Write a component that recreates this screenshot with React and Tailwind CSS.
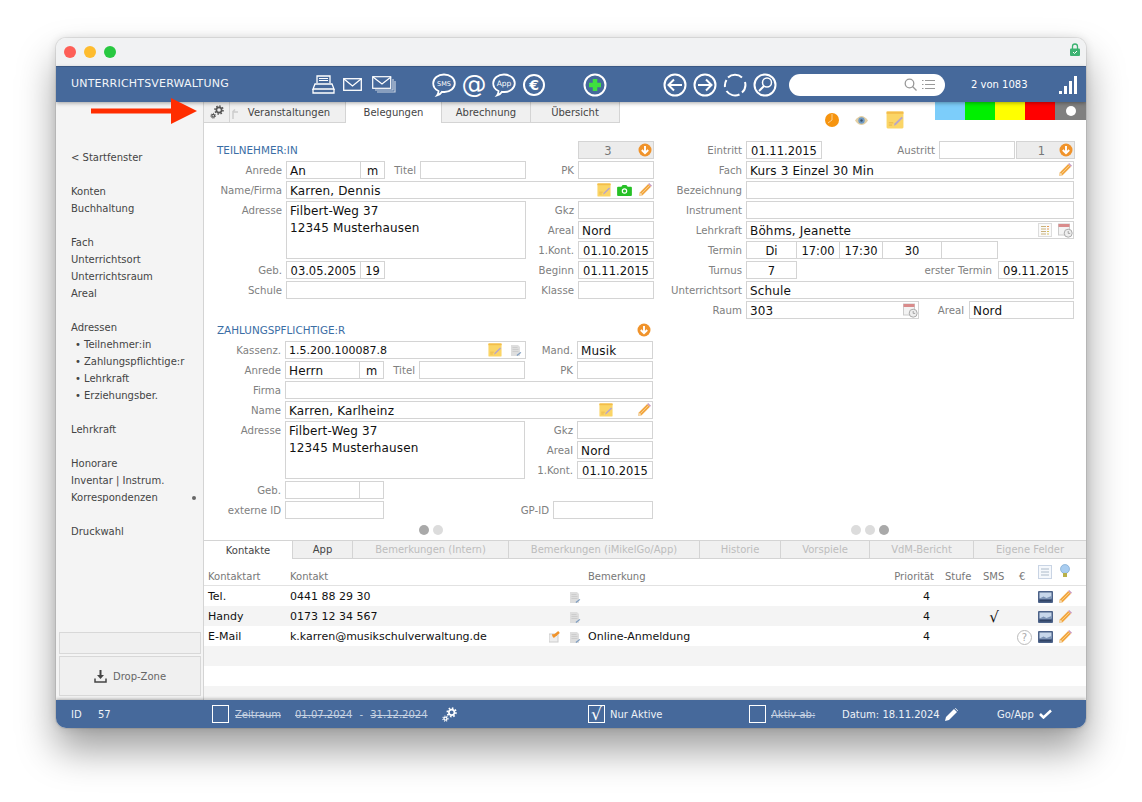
import React from "react";

const Gear = ({ c = "#555", s = 14 }) => (
  <svg width={s} height={s} viewBox="0 0 14 14" fill="none" stroke={c}>
    <circle cx="9" cy="5" r="2.6" strokeWidth="1.6" />
    <circle cx="9" cy="5" r="4" strokeWidth="1.6" strokeDasharray="1.5 1.6" />
    <circle cx="3.2" cy="10.8" r="1.4" strokeWidth="1.2" />
    <circle cx="3.2" cy="10.8" r="2.4" strokeWidth="1" strokeDasharray="1 1" />
  </svg>
);
const Pencil = () => (
  <svg width="14" height="14" viewBox="0 0 14 14">
    <path d="M1 13l.8-3.6L10.2 1l2.8 2.8L4.6 12.2z" fill="#f2a640" />
    <path d="M1 13l.8-3.6 2.8 2.8z" fill="#f3dcb8" />
    <path d="M3.2 10.8l8.4-8.4" stroke="#f9cf8a" strokeWidth="1" />
    <path d="M10.2 1l1-1 2.8 2.8-1 1z" fill="#c99ac4" />
  </svg>
);
const Note = ({ s = 14 }) => (
  <svg width={s} height={s} viewBox="0 0 16 16">
    <rect x=".5" y=".5" width="15" height="15" rx="1" fill="#fbd566" />
    <rect x=".5" y=".5" width="15" height="2" fill="#f3bd4b" />
    <path d="M2.500 10.500h4M2.500 12.500h3" stroke="#e3ac3f" strokeWidth=".7" />
    <path d="M7 13l.6-1.800L13.800 5l1.200 1.200L8.800 12.400z" fill="#b8a6c8" />
  </svg>
);
const Camera = () => (
  <svg width="15" height="12" viewBox="0 0 16 13">
    <path d="M1 3h3.500L6 1h4l1.500 2H15a1 1 0 011 1v8a1 1 0 01-1 1H1a1 1 0 01-1-1V4a1 1 0 011-1z" fill="#26c026" />
    <circle cx="8" cy="7.600" r="3" fill="#fff" />
    <circle cx="8" cy="7.600" r="1.700" fill="#26c026" />
  </svg>
);
const Doc = () => (
  <svg width="11" height="13" viewBox="0 0 11 13">
    <path d="M0 1h7l2 2v9H0z" fill="#dedede" />
    <path d="M1.500 3.500h5M1.500 5.500h6M1.500 7.500h6" stroke="#c6c6c6" strokeWidth=".7" />
    <path d="M5.500 11l4-3 .8.700L6.300 12z" fill="#7d9cc0" />
  </svg>
);
const CalClock = () => (
  <svg width="15" height="15" viewBox="0 0 15 15">
    <rect x=".5" y="1" width="11" height="11" fill="#f3f3f3" stroke="#ccc" />
    <rect x=".5" y="1" width="11" height="3" fill="#d98b8b" />
    <circle cx="10.200" cy="10.200" r="4" fill="#eee" stroke="#aaa" />
    <path d="M10.200 8v2.400h2" stroke="#888" fill="none" strokeWidth=".7" />
  </svg>
);
const ListColor = () => (
  <svg width="14" height="14" viewBox="0 0 14 14">
    <rect x=".5" y=".5" width="13" height="13" fill="#fafafa" stroke="#ddd" />
    <path d="M3 3.500h5M3 6h5M3 8.500h5M3 11h5" stroke="#c9b27c" />
    <path d="M9 3.500h2M9 6h2" stroke="#e79a55" />
    <path d="M9 8.500h2M9 11h2" stroke="#d9c25c" />
  </svg>
);
const OrangeDown = () => (
  <svg width="14" height="14" viewBox="0 0 14 14">
    <circle cx="7" cy="7" r="6.500" fill="#f0932b" />
    <path d="M7 3v7M3.800 7L7 10.200 10.200 7" stroke="#fff" strokeWidth="1.900" fill="none" />
  </svg>
);
const Picture = () => (
  <svg width="15" height="12" viewBox="0 0 15 12">
    <rect x="0" y="0" width="15" height="12" rx="1" fill="#4c6288" />
    <rect x="1.500" y="1.500" width="12" height="6" fill="#c7d7ea" />
    <path d="M1.500 7.500l4-2 3 1.500 5-2v2.500z" fill="#7b93b6" />
    <rect x="1.500" y="9" width="12" height="1.500" fill="#2f4264" />
  </svg>
);
const Bubble = ({ label, size }) => (
  <svg width="24" height="24" viewBox="0 0 24 24" fill="none">
    <path d="M12 1.500c6 0 10.800 3.800 10.800 8.800S18 19 12.500 19c-1 0-1.800 0-2.500-.2-1 1.700-3 3.200-5 3.700 1-1.200 1.500-2.800 1.500-4.500C3 16.500 1.200 13.500 1.200 10.300 1.200 5.300 6 1.500 12 1.500z" stroke="#fff" strokeWidth="1.800" />
    <text x="12" y="13" textAnchor="middle" fontSize={size} fill="#fff" fontFamily="DejaVu Sans">{label}</text>
  </svg>
);
const CircleWrap = ({ children }) => (
  <svg width="24" height="24" viewBox="0 0 24 24" fill="none" stroke="#fff" strokeWidth="2">
    {children}
  </svg>
);

const Label = ({ w, children, className = "" }) => (
  <div style={{ width: w }} className={`shrink-0 pt-[3px] text-right text-[10.200px] leading-[14px] text-[#808080] whitespace-nowrap ${className}`}>
    {children}
  </div>
);
const Box = ({ w, children, center, className = "", h = 18, gray }) => (
  <div
    style={{ width: w, height: h }}
    className={`box-border flex shrink-0 overflow-hidden border border-[#d4d4d4] leading-[18px] text-[#111] whitespace-pre ${center ? "justify-center text-[11.5px]" : "pl-[3px] text-[12px] tracking-[0.15px]"} ${gray ? "bg-[#ececec]" : "bg-white"} ${className}`}
  >
    {children}
  </div>
);
const Addr = () => (
  <div className="w-[240px] shrink-0">
    <div className="mb-[2px] box-border h-[58px] border border-[#d4d4d4] pl-[3px] pt-[1px] text-[12px] leading-[16.500px] tracking-[0.15px] text-[#111]">
      <div>Filbert-Weg 37</div>
      <div>12345 Musterhausen</div>
    </div>
  </div>
);
const Row = ({ children, className = "" }) => <div className={`mb-[2px] flex h-[18px] ${className}`}>{children}</div>;
const Gap = () => <div className="w-[4px] shrink-0" />;
const RL = ({ l, children, w = 76 }) => (
  <Row className="justify-end">
    <Label w={48}>{l}</Label>
    <Gap />
    <Box w={w} center={/\d\d\./.test(children || "")}>{children}</Box>
  </Row>
);
const Icons = ({ children, className = "" }) => (
  <div className={`ml-auto flex h-full items-center ${className}`}>{children}</div>
);

const Block1 = () => (
  <div className="w-[450px]">
    <Row className="items-center justify-between">
      <div className="pl-[13px] pt-[2px] text-[10.400px] text-[#3b6ea5]">TEILNEHMER:IN</div>
      <Box w={76} gray center className="relative pr-[16px] !text-[#777]">3<span className="absolute right-[1px] top-[1px]"><OrangeDown /></span></Box>
    </Row>
    <Row>
      <Label w={78}>Anrede</Label><Gap /><Box w={75}>An</Box><Box w={25} center className="-ml-px">m</Box>
      <Label w={31}>Titel</Label><Gap /><Box w={106} />
      <Label w={48}>PK</Label><Gap /><Box w={76} />
    </Row>
    <Row>
      <Label w={78}>Name/Firma</Label><Gap />
      <Box w={368}>Karren, Dennis
        <Icons className="gap-[6px] pr-[1px]"><Note /><Camera /><Pencil /></Icons>
      </Box>
    </Row>
    <div className="flex">
      <Label w={78}>Adresse</Label><Gap />
      <Addr />
      <div className="flex-1">
        <RL l="Gkz" />
        <RL l="Areal">Nord</RL>
        <RL l="1.Kont.">01.10.2015</RL>
      </div>
    </div>
    <Row>
      <Label w={78}>Geb.</Label><Gap /><Box w={75} center>03.05.2005</Box><Box w={25} center className="-ml-px">19</Box>
      <Label w={189}>Beginn</Label><Gap /><Box w={76} center>01.11.2015</Box>
    </Row>
    <Row>
      <Label w={78}>Schule</Label><Gap /><Box w={240} />
      <Label w={48}>Klasse</Label><Gap /><Box w={76} />
    </Row>
  </div>
);

const Block2 = () => (
  <div className="mt-[20px] w-[449px]">
    <Row className="items-center justify-between">
      <div className="pl-[13px] pt-[2px] text-[10.400px] text-[#3b6ea5]">ZAHLUNGSPFLICHTIGE:R</div>
      <span className="pr-[2px]"><OrangeDown /></span>
    </Row>
    <Row>
      <Label w={77}>Kassenz.</Label><Gap />
      <Box w={241}><span className="text-[11px] tracking-normal">1.5.200.100087.8</span>
        <Icons className="gap-[9px] pr-[3px]"><Note /><Doc /></Icons>
      </Box>
      <Label w={47}>Mand.</Label><Gap /><Box w={76}>Musik</Box>
    </Row>
    <Row>
      <Label w={77}>Anrede</Label><Gap /><Box w={75}>Herrn</Box><Box w={25} center className="-ml-px">m</Box>
      <Label w={31}>Titel</Label><Gap /><Box w={106} />
      <Label w={48}>PK</Label><Gap /><Box w={76} />
    </Row>
    <Row>
      <Label w={77}>Firma</Label><Gap /><Box w={368} />
    </Row>
    <Row>
      <Label w={77}>Name</Label><Gap />
      <Box w={368}>Karren, Karlheinz
        <Icons className="gap-[24px] pr-[1px]"><Note /><Pencil /></Icons>
      </Box>
    </Row>
    <div className="flex">
      <Label w={77}>Adresse</Label><Gap />
      <Addr />
      <div className="flex-1">
        <RL l="Gkz" />
        <RL l="Areal">Nord</RL>
        <RL l="1.Kont.">01.10.2015</RL>
      </div>
    </div>
    <Row>
      <Label w={77}>Geb.</Label><Gap /><Box w={75} /><Box w={25} className="-ml-px" />
    </Row>
    <Row>
      <Label w={77}>externe ID</Label><Gap /><Box w={99} />
      <Label w={165}>GP-ID</Label><Gap /><Box w={100} />
    </Row>
  </div>
);

const Dots = ({ n, active, className = "" }) => (
  <div className={`flex h-[10px] justify-center gap-[4px] ${className}`}>
    {Array.from({ length: n }).map((_, i) => (
      <div key={i} className={`h-[10px] w-[10px] rounded-full ${i === active ? "bg-[#a9a9a9]" : "bg-[#dcdcdc]"}`} />
    ))}
  </div>
);

const RightBlock = () => (
  <div className="ml-[10px] flex w-[410px] flex-col">
    <Row>
      <Label w={78}>Eintritt</Label><Gap /><Box w={76} center>01.11.2015</Box>
      <Label w={113}>Austritt</Label><Gap /><Box w={76} />
      <Box w={59} gray center className="relative ml-[1px] pr-[8px] !text-[#777]">1<span className="absolute right-[1px] top-[1px]"><OrangeDown /></span></Box>
    </Row>
    <Row>
      <Label w={78}>Fach</Label><Gap /><Box w={328}>Kurs 3 Einzel 30 Min<Icons className="pr-[1px]"><Pencil /></Icons></Box>
    </Row>
    <Row><Label w={78}>Bezeichnung</Label><Gap /><Box w={328} /></Row>
    <Row><Label w={78}>Instrument</Label><Gap /><Box w={328} /></Row>
    <Row>
      <Label w={78}>Lehrkraft</Label><Gap />
      <Box w={328}>Böhms, Jeanette<Icons className="gap-[6px]"><ListColor /><CalClock /></Icons></Box>
    </Row>
    <Row>
      <Label w={78}>Termin</Label><Gap />
      <Box w={51} center>Di</Box>
      <Box w={44} center className="-ml-px">17:00</Box>
      <Box w={44} center className="-ml-px">17:30</Box>
      <Box w={60} center className="-ml-px">30</Box>
      <Box w={57} className="-ml-px" />
    </Row>
    <Row>
      <Label w={78}>Turnus</Label><Gap /><Box w={51} center>7</Box>
      <Label w={195}>erster Termin</Label><div className="w-[6px] shrink-0" /><Box w={76} center>09.11.2015</Box>
    </Row>
    <Row><Label w={78}>Unterrichtsort</Label><Gap /><Box w={328}>Schule</Box></Row>
    <Row>
      <Label w={78}>Raum</Label><Gap /><Box w={173}>303<Icons><CalClock /></Icons></Box>
      <Label w={45}>Areal</Label><div className="w-[5px] shrink-0" /><Box w={105}>Nord</Box>
    </Row>
    <Dots n={3} active={2} className="ml-[2px] mt-auto" />
  </div>
);

const Tab = ({ w, active, dim, children, last }) => (
  <div
    style={{ width: w }}
    className={`box-border flex h-full shrink-0 items-center justify-center text-[10px] ${last ? "" : "border-r"} border-[#d4d4d4] ${active ? "bg-white" : "border-b bg-[#f0f0f0]"} ${dim ? "text-[#bdbdbd]" : "text-[#444]"}`}
  >
    {children}
  </div>
);

const cols = { a: "w-[86px] pl-[4px]", b: "w-[258px]", c: "w-[22px]", d: "w-[18px]", e: "w-[300px]", f: "w-[46px] pr-[4px] text-right" };

const TRow = ({ art, kontakt, mail, bem, sms, q, shade }) => (
  <div className={`box-border flex h-[20px] shrink-0 items-center pt-[2px] text-[11px] text-[#111] ${shade ? "bg-[#f4f4f4]" : "bg-white"}`}>
    {art !== undefined && (
      <>
        <div className={cols.a}>{art}</div>
        <div className={cols.b}>{kontakt}</div>
        <div className={cols.c}>
          {mail && (
            <svg width="12" height="12" viewBox="0 0 12 12" className="ml-[1px]">
              <rect x="0" y="3" width="9" height="8" fill="#eee" stroke="#ccc" />
              <path d="M4 6l6-5" stroke="#f0932b" strokeWidth="2.500" />
              <path d="M3 4h5" stroke="#f0932b" strokeWidth="1.500" />
            </svg>
          )}
        </div>
        <div className={cols.d}><Doc /></div>
        <div className={cols.e}>{bem}</div>
        <div className={cols.f}>4</div>
        <div className="w-[49px]" />
        <div className="w-[22px] text-center text-[15px] leading-[15px]">{sms ? "√" : ""}</div>
        <div className="flex w-[32px] justify-end pr-[5px]">
          {q && <div className="flex h-[15px] w-[15px] items-center justify-center rounded-full border border-[#bbb] text-[10px] text-[#aaa]">?</div>}
        </div>
        <div className="flex w-[16px] justify-center"><Picture /></div>
        <div className="ml-[5px]"><Pencil /></div>
      </>
    )}
  </div>
);

const sideGroups = [
  ["< Startfenster"],
  ["Konten", "Buchhaltung"],
  ["Fach", "Unterrichtsort", "Unterrichtsraum", "Areal"],
  ["Adressen", "• Teilnehmer:in", "• Zahlungspflichtige:r", "• Lehrkraft", "• Erziehungsber."],
  ["Lehrkraft"],
  ["Honorare", "Inventar | Instrum.", "Korrespondenzen"],
  ["Druckwahl"],
];

const Check = ({ on }) => (
  <div className="flex h-[18px] w-[17px] shrink-0 items-center justify-center border border-white">
    {on && <span className="text-[17px] leading-[17px] text-white">√</span>}
  </div>
);

export default function App() {
  return (
    <div className="h-[802px] w-[1142px] overflow-hidden bg-white pl-[56px] pt-[38px] font-['DejaVu_Sans',sans-serif]">
      <div className="relative flex h-[690px] w-[1030px] flex-col overflow-hidden rounded-[10px] bg-white shadow-[0_0_0_1px_rgba(0,0,0,0.07),0_22px_38px_rgba(0,0,0,0.38),0_0_10px_rgba(0,0,0,0.12)]">
        {/* title bar */}
        <div className="box-border flex h-[29px] shrink-0 items-center border-b border-[#3f5f8f] bg-[#f1f2f3] pl-[8px]">
          <div className="h-[12px] w-[12px] rounded-full bg-[#fe5f57]" />
          <div className="ml-[8px] h-[12px] w-[12px] rounded-full bg-[#febc2e]" />
          <div className="ml-[8px] h-[12px] w-[12px] rounded-full bg-[#28c840]" />
          <svg width="10" height="13" viewBox="0 0 10 13" className="ml-auto mr-[6px] -mt-[6px]">
            <path d="M2.500 6V3.500a2.500 2.500 0 015 0V6" stroke="#3cb371" strokeWidth="1.300" fill="none" />
            <rect y="5.500" width="10" height="7.500" rx="1" fill="#3cb371" />
            <path d="M3 9l1.500 1.500L7 8" stroke="#fff" fill="none" />
          </svg>
        </div>

        {/* header */}
        <div className="relative z-10 flex h-[35px] shrink-0 items-center bg-[#46699b] pl-[15px] shadow-[0_1px_4px_rgba(0,0,0,0.35)]">
          <div className="w-[241px] shrink-0 text-[11px] tracking-[0.2px] text-[#f2f5f9]">UNTERRICHTSVERWALTUNG</div>
          <svg width="23" height="20" viewBox="0 0 23 20" fill="none" stroke="#fff" strokeWidth="1.300">
            <path d="M5 8V1h13v7" /><path d="M7 3.500h9M7 5.500h9" strokeWidth="1" /><path d="M3 9h17l2 5H1z" fill="none" /><path d="M1 14v4h21v-4" />
          </svg>
          <svg width="19" height="13" viewBox="0 0 19 13" fill="none" stroke="#fff" strokeWidth="1.300" className="ml-[8px]">
            <rect x=".7" y=".7" width="17.600" height="11.600" /><path d="M1 1l8.500 7L18 1" />
          </svg>
          <svg width="24" height="17" viewBox="0 0 24 17" fill="none" stroke="#fff" strokeWidth="1.200" className="ml-[10px]">
            <path d="M3 14h18V3" strokeOpacity=".7" /><path d="M5 16h18V5" strokeOpacity=".7" />
            <rect x=".7" y=".7" width="18" height="11.600" fill="#46699b" /><path d="M1 1l9 7 9-7" />
          </svg>
          <div className="ml-[36px]"><Bubble label="SMS" size="6.500" /></div>
          <div className="ml-[6px] flex h-[24px] w-[24px] items-center justify-center text-[25px] leading-[24px] text-white">@</div>
          <div className="ml-[6px]"><Bubble label="App" size="7.500" /></div>
          <div className="ml-[7px] flex h-[22px] w-[22px] items-center justify-center rounded-full border-2 border-white text-[14px] font-bold leading-[14px] text-white">€</div>
          <div className="ml-[38px]">
            <CircleWrap><circle cx="12" cy="12" r="10.500" /><path d="M12 6v12M6 12h12" stroke="#3ee03e" strokeWidth="4.500" /></CircleWrap>
          </div>
          <div className="ml-[56px]">
            <CircleWrap><circle cx="12" cy="12" r="10.500" /><path d="M19 12H6M11 6.500L5.500 12l5.500 5.500" /></CircleWrap>
          </div>
          <div className="ml-[6px]">
            <CircleWrap><circle cx="12" cy="12" r="10.500" /><path d="M5 12h13M13 6.500l5.500 5.500-5.500 5.500" /></CircleWrap>
          </div>
          <div className="ml-[6px]">
            <CircleWrap>
              <path d="M5 4.500A10.500 10.500 0 0119 4.500M22 9a10.500 10.500 0 01-3 10.500M16.500 21.500A10.500 10.500 0 013.500 18M2 14A10.500 10.500 0 013.500 7" />
            </CircleWrap>
          </div>
          <div className="ml-[6px]">
            <CircleWrap><circle cx="12" cy="12" r="10.500" /><circle cx="14" cy="9.500" r="4.500" strokeWidth="1.500" /><path d="M11 13l-5 5" strokeWidth="2" /></CircleWrap>
          </div>
          <div className="ml-[12px] flex h-[22px] w-[156px] items-center justify-end gap-[5px] rounded-full bg-white pr-[10px]">
            <svg width="13" height="13" viewBox="0 0 13 13" fill="none" stroke="#999" strokeWidth="1.300"><circle cx="5.500" cy="5.500" r="4.300" /><path d="M8.500 8.500l4 4" /></svg>
            <svg width="13" height="11" viewBox="0 0 13 11" stroke="#999" strokeWidth="1.200"><path d="M0 1.500h1.500M3 1.500h10M0 5.500h1.500M3 5.500h10M0 9.500h1.500M3 9.500h10" /></svg>
          </div>
          <div className="ml-[26px] w-[57px] whitespace-nowrap text-[10px] text-white">2 von 1083</div>
          <div className="ml-[31px] flex h-[18px] items-end gap-[2px] self-center">
            <div className="h-[3px] w-[3px] bg-white" />
            <div className="h-[8px] w-[3px] bg-white" />
            <div className="h-[13px] w-[3px] bg-white" />
            <div className="h-[18px] w-[3px] bg-white" />
          </div>
        </div>

        {/* main */}
        <div className="flex min-h-0 flex-1">
          {/* sidebar */}
          <div className="box-border flex w-[148px] shrink-0 flex-col border-r border-[#d4d4d4] bg-[#f4f4f4] pl-[3px] pr-[2px]">
            <div className="flex-1 pl-[12px] pt-[47px] text-[10px] leading-[17px] text-[#444]">
              {sideGroups.map((g, i) => (
                <div key={i} className="mb-[17px]">
                  {g.map((t) => (
                    <div key={t} className={`flex items-center whitespace-pre pr-[5px] ${t.startsWith("•") ? "pl-[4px]" : ""}`}>
                      {t.startsWith("•") ? (
                        <>
                          <span className="w-[9px]">•</span>
                          <span>{t.slice(2)}</span>
                        </>
                      ) : (
                        t
                      )}
                      {t === "Korrespondenzen" && <span className="ml-auto h-[4px] w-[4px] rounded-full bg-[#666]" />}
                    </div>
                  ))}
                </div>
              ))}
            </div>
            <div className="h-[22px] border border-[#d8d8d8] bg-[#f0f0f0]" />
            <div className="mb-[4px] mt-[2px] flex h-[40px] items-center justify-center gap-[6px] border border-[#d8d8d8] bg-[#f0f0f0] text-[10px] text-[#666]">
              <svg width="13" height="13" viewBox="0 0 13 13" fill="none">
                <path d="M6.500 0v7" stroke="#444" strokeWidth="2" /><path d="M3 5h7L6.500 9z" fill="#444" /><path d="M1 8.500V12h11V8.500" stroke="#444" strokeWidth="1.500" />
              </svg>
              Drop-Zone
            </div>
          </div>

          {/* content */}
          <div className="flex min-w-0 flex-1 flex-col">
            <div className="flex min-h-0 flex-1 flex-col">
              <div className="flex h-[21px] shrink-0 items-start">
                <Tab w={26}><Gear /></Tab>
                <Tab w={116}>
                  <svg width="8" height="11" viewBox="0 0 8 11" className="-ml-[14px] mr-[9px] mt-[3px]" fill="none" stroke="#ccc" strokeWidth="1.500"><path d="M2 11V4h5M4 1.500L1.500 4" /></svg>
                  Veranstaltungen
                </Tab>
                <Tab w={96} active>Belegungen</Tab>
                <Tab w={89}>Abrechnung</Tab>
                <Tab w={89}>Übersicht</Tab>
                <svg width="14" height="14" viewBox="0 0 14 14" className="ml-[205px] mt-[11px] shrink-0">
                  <circle cx="7" cy="7" r="7" fill="#f6940f" /><path d="M7 7V1M7 7l-4 3" stroke="#fde0b0" strokeWidth=".8" />
                </svg>
                <svg width="13" height="9" viewBox="0 0 13 9" className="ml-[16px] mt-[14px] shrink-0">
                  <path d="M0 4.500C2 1.500 4.500 0 6.500 0S11 1.500 13 4.500C11 7.500 8.500 9 6.500 9S2 7.500 0 4.500z" fill="#e3cfa3" />
                  <circle cx="6.500" cy="4.500" r="3.200" fill="#6f9ac4" /><circle cx="6.500" cy="4.500" r="1.200" fill="#3a5168" />
                </svg>
                <div className="ml-[18px] mt-[9px] shrink-0"><Note s={18} /></div>
                <div className="ml-[31px] flex h-[18px] shrink-0">
                  <div className="w-[30px] bg-[#7ccdfa]" />
                  <div className="w-[30px] bg-[#00f000]" />
                  <div className="w-[30px] bg-[#ffff00]" />
                  <div className="w-[30px] bg-[#ff0000]" />
                  <div className="flex w-[31px] items-center justify-center bg-[#808080]">
                    <div className="h-[10px] w-[10px] rounded-full bg-white" />
                  </div>
                </div>
              </div>
              <div className="flex min-h-0 flex-1 pb-[5px] pt-[18px]">
                <div className="flex w-[450px] flex-col">
                  <Block1 />
                  <Block2 />
                  <Dots n={2} active={0} className="ml-[4px] mt-auto" />
                </div>
                <RightBlock />
              </div>
            </div>

            {/* bottom */}
            <div className="h-[160px] shrink-0">
              <div className="flex h-[19px] border-t border-[#d4d4d4]">
                <Tab w={89} active>Kontakte</Tab>
                <Tab w={60}>App</Tab>
                <Tab w={156} dim>Bemerkungen (Intern)</Tab>
                <Tab w={191} dim>Bemerkungen (iMikelGo/App)</Tab>
                <Tab w={81} dim>Historie</Tab>
                <Tab w={89} dim>Vorspiele</Tab>
                <Tab w={104} dim>VdM-Bericht</Tab>
                <Tab w={112} dim last>Eigene Felder</Tab>
              </div>
              <div className="flex h-[27px] items-end border-b border-[#e2e2e2] pb-[1px] text-[10px] leading-[15px] text-[#777]">
                <div className={cols.a}>Kontaktart</div>
                <div className={cols.b}>Kontakt</div>
                <div className={cols.c} />
                <div className={cols.d} />
                <div className={cols.e}>Bemerkung</div>
                <div className={`${cols.f} whitespace-nowrap !pr-0`}>Priorität</div>
                <div className="ml-[11px] w-[38px]">Stufe</div>
                <div className="w-[36px]">SMS</div>
                <div className="w-[19px]">€</div>
                <div className="mb-[5px] flex h-[14px] w-[14px] items-center justify-center border border-[#c9d4e4] bg-[#f5f8fc]">
                  <svg width="8" height="8" viewBox="0 0 8 8" stroke="#9aa9bd" strokeWidth=".8"><path d="M0 1h8M0 4h8M0 7h8" /></svg>
                </div>
                <svg width="10" height="14" viewBox="0 0 10 14" className="mb-[6px] ml-[8px]">
                  <circle cx="5" cy="5" r="4.500" fill="#a9cdf0" stroke="#6f9ecb" strokeWidth=".6" />
                  <rect x="3" y="9" width="4" height="4" fill="#b8b04a" />
                </svg>
              </div>
              <TRow art="Tel." kontakt="0441 88 29 30" />
              <TRow art="Handy" kontakt="0173 12 34 567" sms shade />
              <TRow art="E-Mail" kontakt="k.karren@musikschulverwaltung.de" mail bem="Online-Anmeldung" q />
              <TRow shade />
              <TRow />
              <div className="h-[13px] bg-[#f4f4f4]" />
            </div>
          </div>
        </div>

        {/* footer */}
        <div className="relative z-10 flex h-[28px] shrink-0 items-center bg-[#46699b] pl-[15px] text-[10px] text-[#eef2f7] shadow-[0_-1px_3px_rgba(0,0,0,0.3)]">
          <div className="w-[27px]">ID</div>
          <div className="w-[114px]">57</div>
          <Check />
          <div className="ml-[6px] w-[60px] text-[#c7d2e2] line-through">Zeitraum</div>
          <div className="w-[133px] whitespace-nowrap text-[#c7d2e2]"><span className="line-through">01.07.2024</span> <span className="mx-[4px]">-</span> <span className="line-through">31.12.2024</span></div>
          <div className="ml-[14px] w-[146px]"><Gear c="#fff" s={15} /></div>
          <Check on />
          <div className="ml-[5px] w-[139px]">Nur Aktive</div>
          <Check />
          <div className="ml-[5px] w-[71px] text-[#c7d2e2] line-through">Aktiv ab:</div>
          <div className="flex w-[155px] items-center gap-[3px]">
            Datum: 18.11.2024
            <svg width="13" height="13" viewBox="0 0 13 13" fill="#fff" className="ml-[2px]"><path d="M0 13l1-4L9 1l3 3-8 8zM9.800.200l.7-.2 2.500 2.500-.2.700z" /></svg>
          </div>
          <div className="flex items-center gap-[3px]">
            Go/App
            <svg width="13" height="10" viewBox="0 0 13 10" fill="none" stroke="#fff" strokeWidth="2.500" className="ml-[2px]"><path d="M1 5l3.500 3.500L12 1.500" /></svg>
          </div>
        </div>

        {/* red arrow */}
        <svg width="108" height="26" viewBox="0 0 108 26" className="absolute left-[35px] top-[60px] z-20">
          <path d="M0 10.500h80V0l26 13-26 13V15.500H0z" fill="#ff2d00" />
        </svg>
      </div>
    </div>
  );
}
